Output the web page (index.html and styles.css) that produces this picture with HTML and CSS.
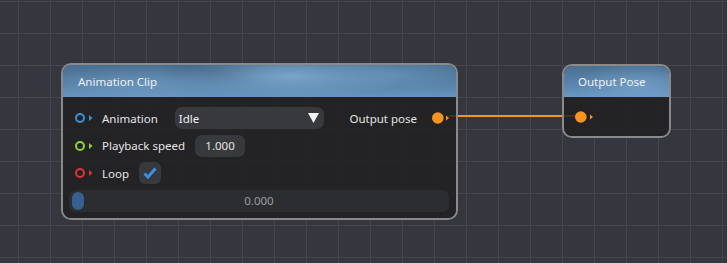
FILE: index.html
```html
<!DOCTYPE html>
<html lang="en">
<head>
    <meta charset="UTF-8">
    <title>Animation Graph</title>
    <link rel="stylesheet" href="styles.css">
</head>
<body>
    <div class="canvas">
        <svg class="links" width="727" height="263">
            <path d="M449 116 L578 116" stroke="#f7931e" stroke-width="2" fill="none"/>
        </svg>

        <div class="node node-clip">
            <div class="node-header">Animation Clip</div>
            <div class="node-body">
                <div class="row pin-row">
                    <svg class="pin" width="18" height="12"><circle cx="5" cy="6" r="4" fill="none" stroke="#3a91da" stroke-width="2"/><polygon points="14,3 17.5,6 14,9" fill="#3a91da"/></svg>
                    <span class="label">Animation</span>
                    <div class="dropdown">
                        <span>Idle</span>
                        <svg width="11" height="10"><polygon points="0,0 11,0 5.5,10" fill="#f2f2f2"/></svg>
                    </div>
                    <span class="label label-out">Output pose</span>
                    <svg class="pin-out" width="17" height="12"><circle cx="5.8" cy="6" r="5.8" fill="#f7931e"/><polygon points="14,3.5 17,6 14,8.5" fill="#f7931e"/></svg>
                </div>
                <div class="row pin-row">
                    <svg class="pin" width="18" height="12"><circle cx="5" cy="6" r="4" fill="none" stroke="#8ed23c" stroke-width="2"/><polygon points="14,3 17.5,6 14,9" fill="#8ed23c"/></svg>
                    <span class="label">Playback speed</span>
                    <div class="field">1.000</div>
                </div>
                <div class="row pin-row">
                    <svg class="pin" width="18" height="12"><circle cx="5" cy="6" r="4" fill="none" stroke="#dd3535" stroke-width="2"/><polygon points="14,3 17.5,6 14,9" fill="#dd3535"/></svg>
                    <span class="label">Loop</span>
                    <div class="checkbox">
                        <svg width="14" height="12"><path d="M1.5 6.5 L5 10 L12.5 1.5" stroke="#3b8fe8" stroke-width="3" fill="none"/></svg>
                    </div>
                </div>
                <div class="row slider">
                    <div class="slider-thumb"></div>
                    <span class="slider-value">0.000</span>
                </div>
            </div>
        </div>

        <div class="node node-out">
            <div class="node-header">Output Pose</div>
            <div class="node-body">
                <div class="row">
                    <svg class="pin-out" width="19" height="12"><circle cx="5.8" cy="6" r="5.8" fill="#f7931e"/><polygon points="15,3.5 18,6 15,8.5" fill="#f7931e"/></svg>
                </div>
            </div>
        </div>
    </div>
</body>
</html>
```

FILE: styles.css
```css
* {
    margin: 0;
    padding: 0;
    box-sizing: border-box;
}

body {
    font-family: 'Noto Sans', 'Open Sans', sans-serif;
    font-size: 11.5px;
    color: #e4e4e4;
    background: #35363e;
}

.canvas {
    position: relative;
    width: 727px;
    height: 263px;
    overflow: hidden;
    background-color: #35363e;
    background-image:
        linear-gradient(to right, #46474e 1px, transparent 1px),
        linear-gradient(to bottom, #46474e 1px, transparent 1px);
    background-size: 32px 32px;
    background-position: 18px 1px;
}

.links {
    position: absolute;
    left: 0;
    top: 0;
}

.node {
    position: absolute;
    border: 2px solid #8a8a8c;
    border-radius: 10px;
    overflow: hidden;
}

.node-clip {
    left: 61px;
    top: 63px;
    width: 397px;
}

.node-out {
    left: 562px;
    top: 64px;
    width: 109px;
}

.node-header {
    height: 32px;
    display: flex;
    align-items: center;
    padding-left: 15px;
    color: #eef1f5;
    background:
        radial-gradient(ellipse 30% 70% at 58% 35%, rgba(130, 176, 214, 0.8) 0%, transparent 100%),
        radial-gradient(ellipse 25% 60% at 20% 60%, rgba(120, 165, 205, 0.5) 0%, transparent 100%),
        radial-gradient(ellipse 20% 60% at 85% 30%, rgba(110, 160, 200, 0.5) 0%, transparent 100%),
        radial-gradient(ellipse 15% 50% at 40% 20%, rgba(50, 80, 110, 0.5) 0%, transparent 100%),
        linear-gradient(to bottom, #4a6f91 0%, #5780a6 60%, #6594c0 100%);
}

.node-out .node-header {
    height: 31px;
    padding-left: 14px;
    background:
        radial-gradient(ellipse 60% 70% at 70% 60%, rgba(125, 170, 210, 0.6) 0%, transparent 100%),
        linear-gradient(to bottom, #4b6f90 0%, #5a85ad 60%, #6798c4 100%);
}

.node-body {
    background: rgba(33, 33, 34, 0.86);
    padding: 10px 7px 6px 6px;
    display: flex;
    flex-direction: column;
    gap: 5.5px;
}

.node-out .node-body {
    padding: 9px 0 8px 11px;
}

.row {
    height: 22px;
    display: flex;
    align-items: center;
}

.pin-row {
    padding-left: 6px;
}

.pin {
    flex: none;
    margin-right: 9px;
}

.pin-out {
    flex: none;
}

.label {
    margin-right: 10px;
    white-space: nowrap;
}

.label-out {
    margin-left: auto;
    margin-right: 15px;
}

.dropdown {
    width: 149px;
    height: 22px;
    margin-left: 7px;
    padding: 0 5px 0 4px;
    display: flex;
    align-items: center;
    justify-content: space-between;
    background: #38393c;
    border-radius: 7px;
    color: #f0f0f0;
}

.field {
    width: 50px;
    height: 22px;
    display: flex;
    align-items: center;
    justify-content: center;
    background: #38393c;
    border-radius: 7px;
}

.checkbox {
    width: 22px;
    height: 22px;
    display: flex;
    align-items: center;
    justify-content: center;
    background: #38393c;
    border-radius: 6px;
}

.slider {
    position: relative;
    background: #2c2d30;
    border-radius: 7px;
    justify-content: center;
}

.slider-thumb {
    position: absolute;
    left: 3px;
    top: 2px;
    width: 12px;
    height: 18px;
    border-radius: 6px;
    background: #35608f;
}

.slider-value {
    color: #9a9b9e;
}
```
